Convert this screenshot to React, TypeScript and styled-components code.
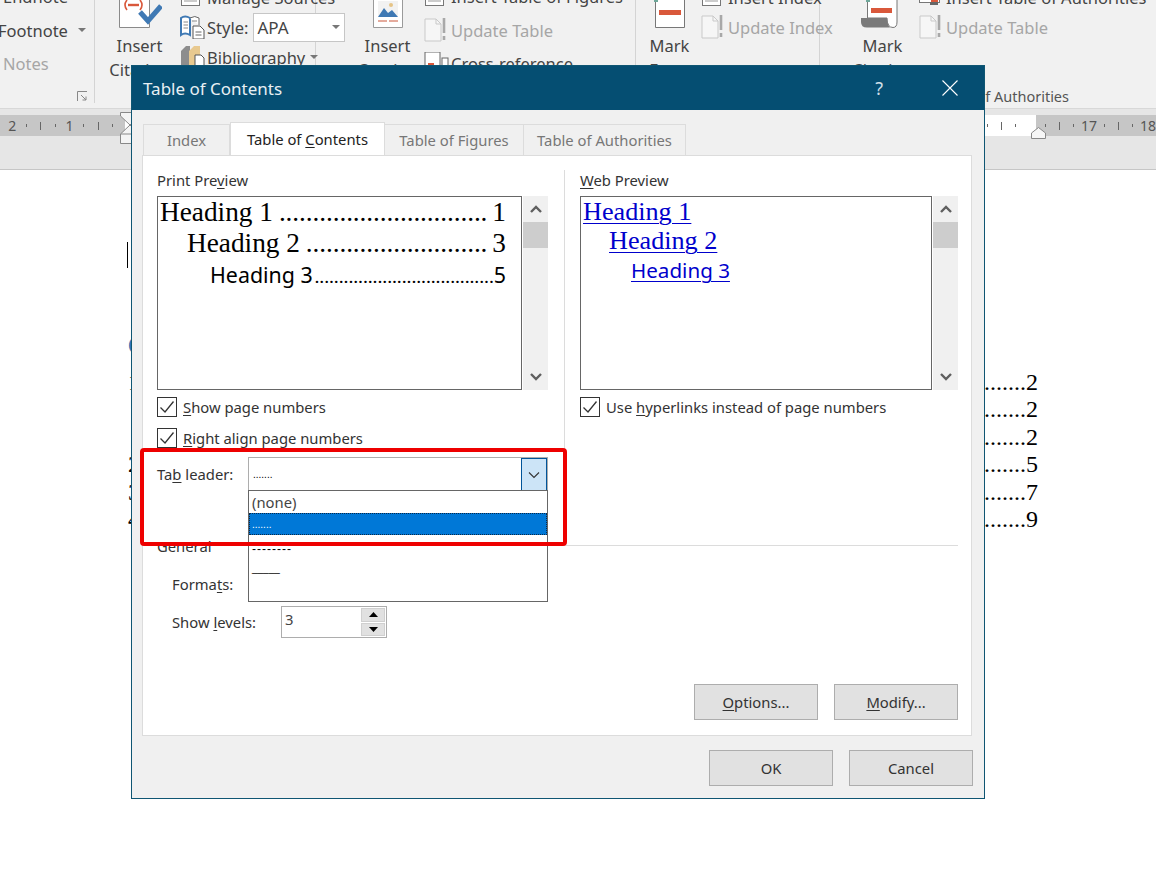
import React from 'react';
import styled, { createGlobalStyle } from 'styled-components';

const GlobalStyle = createGlobalStyle`
  html, body {
    margin: 0;
    padding: 0;
    background: #fff;
    font-family: "Noto Sans", "Open Sans", sans-serif;
  }
  * { box-sizing: border-box; }
  u { text-underline-offset: 2px; text-decoration-thickness: 1px; }
`;

//Page
const Page = styled.div`
  position: relative;
  width: 1156px;
  height: 873px;
  overflow: hidden;
  background: #fff;
`;

//Ribbon
const Ribbon = styled.div`
  height: 108px;
  overflow: hidden;
  background: #f1f1f1;
`;

const RibbonInner = styled.div`
  display: flex;
  height: 128px;
  margin-top: -20px;
`;

const Group = styled.div<{ $width: number; $pad?: number; $last?: boolean }>`
  position: relative;
  flex: 0 0 ${(p) => p.$width}px;
  min-width: 0;
  display: flex;
  padding-left: ${(p) => p.$pad || 0}px;
  height: 123px;
  border-right: ${(p) => (p.$last ? 'none' : '1px solid #d4d4d4')};
  color: #444;
  font-size: 16.5px;
`;

const LargeButton = styled.div<{ $width: number }>`
  flex: 0 0 ${(p) => p.$width}px;
  display: flex;
  flex-direction: column;
  align-items: center;
  white-space: nowrap;
`;

const LargeIcon = styled.div`
  height: 54px;
  display: flex;
  align-items: flex-end;
  justify-content: center;
  padding-bottom: 6px;
  flex-shrink: 0;
`;

const LargeLabel = styled.div`
  height: 24px;
  line-height: 24px;
`;

const SmallColumn = styled.div<{ $top: number }>`
  display: flex;
  flex-direction: column;
  padding-top: ${(p) => p.$top}px;
`;

const SmallRow = styled.div<{ $height: number; $disabled?: boolean; $indent?: number }>`
  display: flex;
  align-items: center;
  gap: 2px;
  height: ${(p) => p.$height}px;
  margin-left: ${(p) => p.$indent || 0}px;
  white-space: nowrap;
  color: ${(p) => (p.$disabled ? '#a6a6a6' : '#444')};
`;

const SmallIcon = styled.span`
  flex: 0 0 25px;
  display: flex;
  align-items: center;
`;

const Caret = styled.span<{ $gap?: number }>`
  display: inline-block;
  width: 0;
  height: 0;
  margin-left: ${(p) => p.$gap ?? 8}px;
  border-left: 4px solid transparent;
  border-right: 4px solid transparent;
  border-top: 4px solid #777;
`;

const StyleSelect = styled.div`
  display: flex;
  align-items: center;
  justify-content: space-between;
  width: 92px;
  height: 29px;
  margin-left: 3px;
  padding: 0 4px 0 3px;
  background: #fff;
  border: 1px solid #c6c6c6;
  font-size: 17px;
`;

const GroupLabel = styled.div`
  position: absolute;
  right: 87px;
  bottom: -5px;
  line-height: 24px;
  font-size: 14.5px;
  color: #555;
  white-space: nowrap;
`;

const Launcher = styled.svg`
  position: absolute;
  right: 6px;
  bottom: 1px;
`;

const NotesColumn = styled.div`
  display: flex;
  flex-direction: column;
`;

//Ruler
const RulerBand = styled.div`
  position: relative;
  height: 62px;
  padding-top: 6px;
  background: #e6e6e6;
  border-top: 1px solid #d8d8d8;
  border-bottom: 1px solid #c6c6c6;
`;

const RulerStrip = styled.div`
  display: flex;
  height: 21px;
`;

const RulerPart = styled.div<{ $width?: number; $white?: boolean; $align?: string; $pad?: string }>`
  display: flex;
  flex: ${(p) => (p.$width ? `0 0 ${p.$width}px` : '1')};
  justify-content: ${(p) => p.$align || 'flex-start'};
  padding: ${(p) => p.$pad || '0'};
  background: ${(p) => (p.$white ? '#fff' : '#c6c6c6')};
`;

const RulerCell = styled.span`
  flex: 0 0 14.35px;
  display: flex;
  align-items: center;
  justify-content: center;
  font-size: 14px;
  color: #555;
`;

const Dot = styled.i`
  width: 1px;
  height: 3px;
  background: #666;
`;

const Tick = styled.i`
  width: 1px;
  height: 8px;
  background: #666;
`;

const MarkerLeft = styled.svg`
  position: absolute;
  left: 120px;
  top: 3px;
`;

const MarkerRight = styled.svg`
  position: absolute;
  left: 1031px;
  top: 18px;
`;

//Document behind the dialog
const Sheet = styled.div`
  display: flex;
  flex-direction: column;
  padding: 72px 118px 0 128px;
  font-family: "Liberation Serif", serif;
  font-size: 24px;
  color: #000;
`;

const Cursor = styled.div`
  width: 1px;
  height: 26px;
  margin-left: -1px;
  background: #000;
`;

const DocHeading = styled.div`
  height: 32px;
  margin-top: 62px;
  margin-bottom: 6.5px;
  line-height: 32px;
  font-family: "Liberation Sans", sans-serif;
  font-weight: 700;
  color: #2e74b5;
`;

const TocRow = styled.div`
  display: flex;
  height: 27.6px;
  line-height: 27.6px;
`;

const TocLeader = styled.span`
  margin-left: auto;
  white-space: nowrap;
`;

//Dialog
const Dialog = styled.div`
  position: absolute;
  left: 131px;
  top: 65px;
  width: 854px;
  height: 734px;
  display: flex;
  flex-direction: column;
  background: #f0f0f0;
  border: 1px solid #0f5673;
  color: #333;
  font-size: 14.8px;
`;

const TitleBar = styled.div`
  flex: 0 0 44px;
  display: flex;
  align-items: center;
  padding: 0 26px 0 11px;
  background: #054e72;
  color: #e8f0f4;
  font-size: 17px;
`;

const Title = styled.div`
  flex: 1;
`;

const Help = styled.div`
  margin-right: 59px;
  font-size: 18px;
  color: #cfdfe8;
`;

const DialogBody = styled.div`
  flex: 1;
  display: flex;
  flex-direction: column;
  padding: 12px 12px 12px 10px;
`;

const TabStrip = styled.div`
  display: flex;
  align-items: flex-end;
  height: 33px;
  padding-left: 1px;
`;

const Tab = styled.div<{ $active?: boolean; $width: number }>`
  flex: 0 0 ${(p) => p.$width}px;
  display: flex;
  align-items: center;
  justify-content: center;
  height: ${(p) => (p.$active ? 33 : 31)}px;
  background: ${(p) => (p.$active ? '#fff' : '#f0f0f0')};
  border: 1px solid #dcdcdc;
  border-left-width: ${(p) => (p.$active ? 1 : 0)}px;
  border-bottom: none;
  color: ${(p) => (p.$active ? '#222' : '#777')};
  &:first-child { border-left-width: 1px; }
`;

const Panel = styled.div`
  position: relative;
  height: 581px;
  display: flex;
  flex-direction: column;
  padding: 14px 13px 15px 14px;
  background: #fff;
  border: 1px solid #dcdcdc;
`;

const Columns = styled.div`
  display: flex;
  height: 366px;
`;

const LeftColumn = styled.div`
  flex: 0 0 391px;
  min-width: 0;
`;

const Divider = styled.div`
  flex: 0 0 1px;
  margin: 0 15px 0 16px;
  background: #dcdcdc;
`;

const RightColumn = styled.div`
  flex: 0 0 378px;
  min-width: 0;
`;

const FieldLabel = styled.div`
  height: 20px;
  margin-bottom: 6px;
  line-height: 20px;
`;

const PreviewRow = styled.div`
  display: flex;
  height: 194px;
`;

const PreviewBox = styled.div`
  flex: 1;
  min-width: 0;
  padding: 0 15px 0 2px;
  border: 1px solid #666;
  color: #000;
`;

const ScrollTrack = styled.div`
  flex: 0 0 25px;
  display: flex;
  flex-direction: column;
  margin-left: 1px;
  background: #f0f0f0;
`;

const ScrollButton = styled.div`
  flex: 0 0 26px;
  display: flex;
  align-items: center;
  justify-content: center;
`;

const ScrollThumb = styled.div`
  flex: 0 0 26px;
  background: #cdcdcd;
`;

const ScrollSpace = styled.div`
  flex: 1;
`;

const LeaderRow = styled.div<{ $indent: number; $sans?: boolean }>`
  display: flex;
  align-items: baseline;
  height: 31px;
  padding-left: ${(p) => p.$indent}px;
  font-family: ${(p) => (p.$sans ? '"Noto Sans", sans-serif' : '"Liberation Serif", serif')};
  font-size: ${(p) => (p.$sans ? 21.4 : 27.3)}px;
  line-height: 31px;
  white-space: nowrap;
`;

const Leader = styled.span<{ $gap: number; $size: number }>`
  flex: 1;
  min-width: 0;
  margin-right: ${(p) => p.$gap}px;
  text-align: right;
  font-family: "Liberation Serif", serif;
  font-size: ${(p) => p.$size}px;
  letter-spacing: -0.1px;
`;

const WebLink = styled.div<{ $indent: number; $sans?: boolean }>`
  height: 29.25px;
  padding-left: ${(p) => p.$indent}px;
  font-family: ${(p) => (p.$sans ? '"Noto Sans", sans-serif' : '"Liberation Serif", serif')};
  font-size: ${(p) => (p.$sans ? 20.6 : 26.2)}px;
  line-height: 29px;
  color: #0000cc;
  text-decoration: underline;
  text-decoration-thickness: 1px;
  text-underline-offset: 3px;
  white-space: nowrap;
`;

const CheckRow = styled.div<{ $top: number }>`
  display: flex;
  align-items: center;
  gap: 6px;
  height: 20px;
  margin-top: ${(p) => p.$top}px;
  white-space: nowrap;
`;

const CheckBox = styled.span`
  flex: 0 0 20px;
  height: 20px;
  display: flex;
  align-items: center;
  justify-content: center;
  border: 1px solid #333;
  background: #fff;
`;

const LeaderField = styled.div`
  display: flex;
  align-items: center;
  height: 34px;
  margin-top: 9px;
`;

const LeaderLabel = styled.div`
  flex: 0 0 91px;
`;

const Combo = styled.div`
  position: relative;
  flex: 0 0 300px;
  height: 34px;
  display: flex;
  align-items: center;
  justify-content: space-between;
  padding-left: 4px;
  border: 1px solid #adadad;
  border-bottom: none;
`;

const LeaderSample = styled.span<{ $size?: number; $spacing?: number; $color?: string }>`
  font-family: "Liberation Sans", sans-serif;
  font-size: ${(p) => p.$size || 10}px;
  letter-spacing: ${(p) => p.$spacing || 0}px;
  color: ${(p) => p.$color || '#000'};
`;

const ComboButton = styled.span`
  flex: 0 0 26px;
  height: 33px;
  display: flex;
  align-items: center;
  justify-content: center;
  background: #cce4f7;
  border: 1px solid #005499;
`;

const DropList = styled.div`
  position: absolute;
  left: -1px;
  top: 32px;
  width: 300px;
  height: 112px;
  z-index: 2;
  background: #fff;
  border: 1px solid #666;
`;

const DropItem = styled.div<{ $selected?: boolean; $drop?: number }>`
  display: flex;
  align-items: center;
  height: 22px;
  padding: ${(p) => p.$drop || 0}px 0 0 3px;
  color: ${(p) => (p.$selected ? '#fff' : '#444')};
  background: ${(p) => (p.$selected ? '#0078d7' : 'transparent')};
  outline: ${(p) => (p.$selected ? '1px dotted #0a2a4a' : 'none')};
  outline-offset: -1px;
`;

const GeneralRow = styled.div`
  display: flex;
  align-items: center;
  gap: 10px;
  height: 20px;
`;

const GeneralLine = styled.div`
  flex: 1;
  height: 1px;
  margin-top: -2px;
  background: #dcdcdc;
`;

const FormatRow = styled.div<{ $top: number }>`
  display: flex;
  align-items: center;
  height: 32px;
  margin-top: ${(p) => p.$top}px;
  padding-left: 15px;
`;

const LevelsLabel = styled.div`
  flex: 0 0 109px;
`;

const Spinner = styled.div`
  display: flex;
  width: 106px;
  height: 32px;
  padding: 1px;
  border: 1px solid #adadad;
`;

const SpinnerValue = styled.div`
  flex: 1;
  padding: 1px 0 0 2px;
  color: #444;
`;

const SpinnerButtons = styled.div`
  flex: 0 0 24px;
  display: flex;
  flex-direction: column;
  gap: 1px;
`;

const SpinnerButton = styled.div`
  flex: 1;
  display: flex;
  align-items: center;
  justify-content: center;
  background: #e1e1e1;
  border: 1px solid #d0d0d0;
`;

const ButtonRow = styled.div<{ $gap: number }>`
  display: flex;
  justify-content: flex-end;
  gap: ${(p) => p.$gap}px;
  margin-top: auto;
`;

const DialogButton = styled.div`
  flex: 0 0 124px;
  height: 36px;
  display: flex;
  align-items: center;
  justify-content: center;
  background: #e1e1e1;
  border: 1px solid #adadad;
  color: #333;
`;

const Footer = styled.div`
  display: flex;
  justify-content: flex-end;
  gap: 16px;
  margin: 14px -1px 0 0;
`;

const RedFrame = styled.div`
  position: absolute;
  left: -3px;
  top: 292px;
  width: 427px;
  height: 98px;
  z-index: 3;
  border: 4px solid #ee0000;
  border-radius: 4px;
  pointer-events: none;
`;

//Icons
const Chevron = ({ up }: { up?: boolean }) => (
  <svg width="14" height="10" viewBox="0 0 14 10">
    <path
      d={up ? 'M2 8 L7 3 L12 8' : 'M2 2 L7 7 L12 2'}
      fill="none"
      stroke="#5f5f5f"
      strokeWidth="2.4"
    />
  </svg>
);

const Check = () => (
  <svg width="16" height="14" viewBox="0 0 16 14">
    <path d="M1.5 7.5 L6 12 L14.5 1.5" fill="none" stroke="#333" strokeWidth="1.3" />
  </svg>
);

const Triangle = ({ up }: { up?: boolean }) => (
  <svg width="9" height="5" viewBox="0 0 9 5">
    <path d={up ? 'M4.5 0 L9 5 L0 5 Z' : 'M0 0 L9 0 L4.5 5 Z'} fill="#000" />
  </svg>
);

const CitationIcon = () => (
  <svg width="44" height="48" viewBox="0 0 44 48">
    <path d="M1.5 0 V47.5 H31.5 V0" fill="#fff" stroke="#8a8a8a" />
    <path d="M9 20 Q5 25 9 30 M22 20 Q26 25 22 30" fill="none" stroke="#d9583b" strokeWidth="1.6" />
    <path d="M10 25 H21" stroke="#d9583b" strokeWidth="2.4" />
    <path d="M22 32 L30 41 L43 26" fill="none" stroke="#3f79b4" strokeWidth="5" />
  </svg>
);

const CaptionIcon = () => (
  <svg width="30" height="48" viewBox="0 0 30 48">
    <path d="M0.5 0 V47.5 H29.5 V0" fill="#fff" stroke="#9a9a9a" />
    <rect x="5" y="21" width="20" height="16" fill="#f2f2f2" />
    <circle cx="18" cy="25" r="2" fill="#e6c487" />
    <path d="M5 37 L11 28 L15 33 L19 30 L25 37 Z" fill="#3f79b4" />
    <path d="M5 41 H14 M16 41 H25" stroke="#c9563a" />
  </svg>
);

const MarkEntryIcon = () => (
  <svg width="32" height="48" viewBox="0 0 32 48">
    <path d="M1.5 0 V47.5 H30.5 V0" fill="#fff" stroke="#777" />
    <rect x="0" y="19" width="4" height="3" fill="#6fa89a" />
    <rect x="5" y="30" width="22" height="5" fill="#d9583b" />
  </svg>
);

const MarkCitationIcon = () => (
  <svg width="44" height="48" viewBox="0 0 44 48">
    <path d="M6.5 0 V38 H26 Q26 47.5 32 47.5 Q36 47.5 36 42 V0" fill="#fff" stroke="#777" />
    <path d="M0 38 H26 Q26 44 29 47.5 H6 Q0 47.5 0 42 Z" fill="#7a7a7a" />
    <rect x="5" y="19" width="4" height="3" fill="#6fa89a" />
    <rect x="10" y="28" width="21" height="5" fill="#d9583b" />
  </svg>
);

const StyleIcon = () => (
  <svg width="25" height="24" viewBox="0 0 25 24">
    <path d="M1 3 Q5 0 10 3 V20 Q5 17 1 20 Z" fill="#fff" stroke="#3f79b4" strokeWidth="2" />
    <path d="M10 3 Q15 0 19 3 V10" fill="#fff" stroke="#666" />
    <path d="M3.5 7 H8 M3.5 10 H8 M3.5 13 H8 M12 6 H17" stroke="#888" />
    <path d="M13 11 H20 L24 15 V24 H13 Z" fill="#fff" stroke="#555" />
    <path d="M15.5 17 H21.5 M15.5 20 H21.5" stroke="#666" />
  </svg>
);

const BooksIcon = () => (
  <svg width="25" height="24" viewBox="0 0 25 24">
    <path d="M1 6 L6 1 H10 V24 H1 Z" fill="#8d8d8d" />
    <path d="M9 6 L14 1 H20 V10 H15 V24 H9 Z" fill="#e8c98f" />
    <path d="M15 10 H21 L24 13 V24 H15 Z" fill="#fff" stroke="#555" />
  </svg>
);

const SheetIcon = () => (
  <svg width="25" height="20" viewBox="0 0 25 20">
    <rect x="1.5" y="0.5" width="18" height="18" fill="#fff" stroke="#777" />
    <path d="M4 8 H17 M4 11 H17 M4 14 H17" stroke="#999" />
  </svg>
);

const UpdateIcon = () => (
  <svg width="25" height="24" viewBox="0 0 25 24">
    <path d="M1 1 H12 L17 6 V23 H1 Z" fill="#f6f6f6" stroke="#c9c9c9" />
    <path d="M12 1 V6 H17" fill="none" stroke="#c9c9c9" />
    <path d="M20 0 V15 M20 18 V22" stroke="#a8a8a8" strokeWidth="2.6" />
  </svg>
);

const CrossRefIcon = () => (
  <svg width="25" height="24" viewBox="0 0 25 24">
    <rect x="1" y="0" width="15" height="24" fill="#fff" stroke="#666" />
    <path d="M4 12 H10" stroke="#d9583b" strokeWidth="2" />
    <rect x="18" y="6" width="6" height="8" fill="#fff" stroke="#666" />
  </svg>
);

const AuthoritiesIcon = () => (
  <svg width="25" height="20" viewBox="0 0 25 20">
    <rect x="0.5" y="0.5" width="20" height="15" fill="#fff" stroke="#777" />
    <rect x="12" y="6" width="7" height="9" fill="#d9583b" />
    <rect x="11" y="15" width="8" height="3" fill="#666" />
  </svg>
);

const UNDER_THE_DIALOG = '.'.repeat(40);
const TOC_LABELS = ['1', '', '', '2', '3', '4'];
const TOC_PAGES = ['2', '2', '2', '5', '7', '9'];

const App = () => {
  return (
    <Page>
      <GlobalStyle />

      <Ribbon>
        <RibbonInner>
          <Group $width={95}>
            <NotesColumn>
              <SmallRow $height={33.5} $indent={3}>Endnote</SmallRow>
              <SmallRow $height={33.5} $indent={-2}>
                Footnote
                <Caret />
              </SmallRow>
              <SmallRow $height={33.5} $indent={3} $disabled>Notes</SmallRow>
            </NotesColumn>
            <Launcher width="11" height="11" viewBox="0 0 11 11">
              <path d="M0.5 10 V0.5 H10" fill="none" stroke="#888" />
              <path d="M4 4 L9 9 M9 5.5 V9 H5.5" fill="none" stroke="#888" />
            </Launcher>
          </Group>

          <Group $width={221} $pad={4}>
            <LargeButton $width={81}>
              <LargeIcon><CitationIcon /></LargeIcon>
              <LargeLabel>Insert</LargeLabel>
              <LargeLabel>Citation</LargeLabel>
            </LargeButton>
            <SmallColumn $top={2}>
              <SmallRow $height={30}>
                <SmallIcon><SheetIcon /></SmallIcon>
                Manage Sources
              </SmallRow>
              <SmallRow $height={30}>
                <SmallIcon><StyleIcon /></SmallIcon>
                Style:
                <StyleSelect>
                  APA
                  <Caret />
                </StyleSelect>
              </SmallRow>
              <SmallRow $height={30}>
                <SmallIcon><BooksIcon /></SmallIcon>
                Bibliography
                <Caret $gap={3} />
              </SmallRow>
            </SmallColumn>
          </Group>

          <Group $width={320} $pad={35}>
            <LargeButton $width={73}>
              <LargeIcon><CaptionIcon /></LargeIcon>
              <LargeLabel>Insert</LargeLabel>
              <LargeLabel>Caption</LargeLabel>
            </LargeButton>
            <SmallColumn $top={0}>
              <SmallRow $height={33.5}>
                <SmallIcon><SheetIcon /></SmallIcon>
                Insert Table of Figures
              </SmallRow>
              <SmallRow $height={33.5} $disabled>
                <SmallIcon><UpdateIcon /></SmallIcon>
                Update Table
              </SmallRow>
              <SmallRow $height={33.5}>
                <SmallIcon><CrossRefIcon /></SmallIcon>
                Cross-reference
              </SmallRow>
            </SmallColumn>
          </Group>

          <Group $width={184} $pad={2}>
            <LargeButton $width={63}>
              <LargeIcon><MarkEntryIcon /></LargeIcon>
              <LargeLabel>Mark</LargeLabel>
              <LargeLabel>Entry</LargeLabel>
            </LargeButton>
            <SmallColumn $top={2}>
              <SmallRow $height={30}>
                <SmallIcon><SheetIcon /></SmallIcon>
                Insert Index
              </SmallRow>
              <SmallRow $height={30} $disabled>
                <SmallIcon><UpdateIcon /></SmallIcon>
                Update Index
              </SmallRow>
            </SmallColumn>
          </Group>

          <Group $width={336} $pad={26} $last>
            <LargeButton $width={73}>
              <LargeIcon><MarkCitationIcon /></LargeIcon>
              <LargeLabel>Mark</LargeLabel>
              <LargeLabel>Citation</LargeLabel>
            </LargeButton>
            <SmallColumn $top={2}>
              <SmallRow $height={30}>
                <SmallIcon><AuthoritiesIcon /></SmallIcon>
                Insert Table of Authorities
              </SmallRow>
              <SmallRow $height={30} $disabled>
                <SmallIcon><UpdateIcon /></SmallIcon>
                Update Table
              </SmallRow>
            </SmallColumn>
            <GroupLabel>Table of Authorities</GroupLabel>
          </Group>
        </RibbonInner>
      </Ribbon>

      <RulerBand>
        <RulerStrip>
          <RulerPart $width={125} $pad="0 0 0 5px">
            <RulerCell>2</RulerCell>
            <RulerCell><Dot /></RulerCell>
            <RulerCell><Tick /></RulerCell>
            <RulerCell><Dot /></RulerCell>
            <RulerCell>1</RulerCell>
            <RulerCell><Dot /></RulerCell>
            <RulerCell><Tick /></RulerCell>
            <RulerCell><Dot /></RulerCell>
          </RulerPart>
          <RulerPart $white $align="flex-end" $pad="0 13px 0 0">
            <RulerCell><Dot /></RulerCell>
            <RulerCell><Tick /></RulerCell>
            <RulerCell><Dot /></RulerCell>
          </RulerPart>
          <RulerPart $width={118} $pad="0 0 0 2px">
            <RulerCell><Dot /></RulerCell>
            <RulerCell><Tick /></RulerCell>
            <RulerCell><Dot /></RulerCell>
            <RulerCell>17</RulerCell>
            <RulerCell><Dot /></RulerCell>
            <RulerCell><Tick /></RulerCell>
            <RulerCell><Dot /></RulerCell>
            <RulerCell>18</RulerCell>
          </RulerPart>
        </RulerStrip>
        <MarkerLeft width="20" height="32" viewBox="0 0 20 32">
          <path d="M0.5 0.5 H19 V4 L10 13 L19 22 V31.5 H0.5 V22 L10 13 L0.5 4 Z" fill="#f4f4f4" stroke="#888" />
          <path d="M0.5 22 H19" stroke="#888" />
        </MarkerLeft>
        <MarkerRight width="15" height="12" viewBox="0 0 15 12">
          <path d="M7.5 0.5 L14.5 6 V11.5 H0.5 V6 Z" fill="#f6f6f6" stroke="#888" />
        </MarkerRight>
      </RulerBand>

      <Sheet>
        <Cursor />
        <DocHeading>C</DocHeading>
        {TOC_PAGES.map((page, i) => (
          <TocRow key={i}>
            <span>{TOC_LABELS[i]}</span>
            <TocLeader>{UNDER_THE_DIALOG}{page}</TocLeader>
          </TocRow>
        ))}
      </Sheet>

      <Dialog>
        <TitleBar>
          <Title>Table of Contents</Title>
          <Help>?</Help>
          <svg width="16" height="16" viewBox="0 0 16 16">
            <path d="M0.5 0.5 L15.5 15.5 M15.5 0.5 L0.5 15.5" stroke="#fff" strokeWidth="1.1" />
          </svg>
        </TitleBar>

        <DialogBody>
          <TabStrip>
            <Tab $width={87}>Index</Tab>
            <Tab $active $width={155}>Table of&nbsp;<u>C</u>ontents</Tab>
            <Tab $width={139}>Table of Figures</Tab>
            <Tab $width={162}>Table of Authorities</Tab>
          </TabStrip>

          <Panel>
            <Columns>
              <LeftColumn>
                <FieldLabel>Print Pre<u>v</u>iew</FieldLabel>
                <PreviewRow>
                  <PreviewBox>
                    <LeaderRow $indent={0}>
                      Heading 1<Leader $gap={5} $size={27.3}>{'.'.repeat(31)}</Leader>1
                    </LeaderRow>
                    <LeaderRow $indent={27}>
                      Heading 2<Leader $gap={5} $size={27.3}>{'.'.repeat(27)}</Leader>3
                    </LeaderRow>
                    <LeaderRow $indent={50} $sans>
                      Heading 3<Leader $gap={0} $size={19.8}>{'.'.repeat(37)}</Leader>5
                    </LeaderRow>
                  </PreviewBox>
                  <ScrollTrack>
                    <ScrollButton><Chevron up /></ScrollButton>
                    <ScrollThumb />
                    <ScrollSpace />
                    <ScrollButton><Chevron /></ScrollButton>
                  </ScrollTrack>
                </PreviewRow>

                <CheckRow $top={7}>
                  <CheckBox><Check /></CheckBox>
                  <span><u>S</u>how page numbers</span>
                </CheckRow>
                <CheckRow $top={11}>
                  <CheckBox><Check /></CheckBox>
                  <span><u>R</u>ight align page numbers</span>
                </CheckRow>

                <LeaderField>
                  <LeaderLabel>Ta<u>b</u> leader:</LeaderLabel>
                  <Combo>
                    <LeaderSample $size={10}>.......</LeaderSample>
                    <ComboButton>
                      <svg width="12" height="8" viewBox="0 0 12 8">
                        <path d="M1 1.5 L6 6.5 L11 1.5" fill="none" stroke="#333" strokeWidth="1.1" />
                      </svg>
                    </ComboButton>
                    <DropList>
                      <DropItem>(none)</DropItem>
                      <DropItem $selected>
                        <LeaderSample $size={10} $color="#fff">.......</LeaderSample>
                      </DropItem>
                      <DropItem $drop={5}>
                        <LeaderSample $size={12} $spacing={1}>--------</LeaderSample>
                      </DropItem>
                      <DropItem>
                        <LeaderSample $size={10}>_____</LeaderSample>
                      </DropItem>
                    </DropList>
                  </Combo>
                </LeaderField>
              </LeftColumn>

              <Divider />

              <RightColumn>
                <FieldLabel><u>W</u>eb Preview</FieldLabel>
                <PreviewRow>
                  <PreviewBox>
                    <WebLink $indent={0}>Heading 1</WebLink>
                    <WebLink $indent={26}>Heading 2</WebLink>
                    <WebLink $indent={48} $sans>Heading 3</WebLink>
                  </PreviewBox>
                  <ScrollTrack>
                    <ScrollButton><Chevron up /></ScrollButton>
                    <ScrollThumb />
                    <ScrollSpace />
                    <ScrollButton><Chevron /></ScrollButton>
                  </ScrollTrack>
                </PreviewRow>
                <CheckRow $top={7}>
                  <CheckBox><Check /></CheckBox>
                  <span>Use <u>h</u>yperlinks instead of page numbers</span>
                </CheckRow>
              </RightColumn>
            </Columns>

            <GeneralRow>
              General
              <GeneralLine />
            </GeneralRow>
            <FormatRow $top={12}>
              <span>Forma<u>t</u>s:</span>
            </FormatRow>
            <FormatRow $top={6}>
              <LevelsLabel>Show <u>l</u>evels:</LevelsLabel>
              <Spinner>
                <SpinnerValue>3</SpinnerValue>
                <SpinnerButtons>
                  <SpinnerButton><Triangle up /></SpinnerButton>
                  <SpinnerButton><Triangle /></SpinnerButton>
                </SpinnerButtons>
              </Spinner>
            </FormatRow>

            <ButtonRow $gap={16}>
              <DialogButton><span><u>O</u>ptions...</span></DialogButton>
              <DialogButton><span><u>M</u>odify...</span></DialogButton>
            </ButtonRow>

            <RedFrame />
          </Panel>

          <Footer>
            <DialogButton>OK</DialogButton>
            <DialogButton>Cancel</DialogButton>
          </Footer>
        </DialogBody>
      </Dialog>
    </Page>
  );
};

export default App;
